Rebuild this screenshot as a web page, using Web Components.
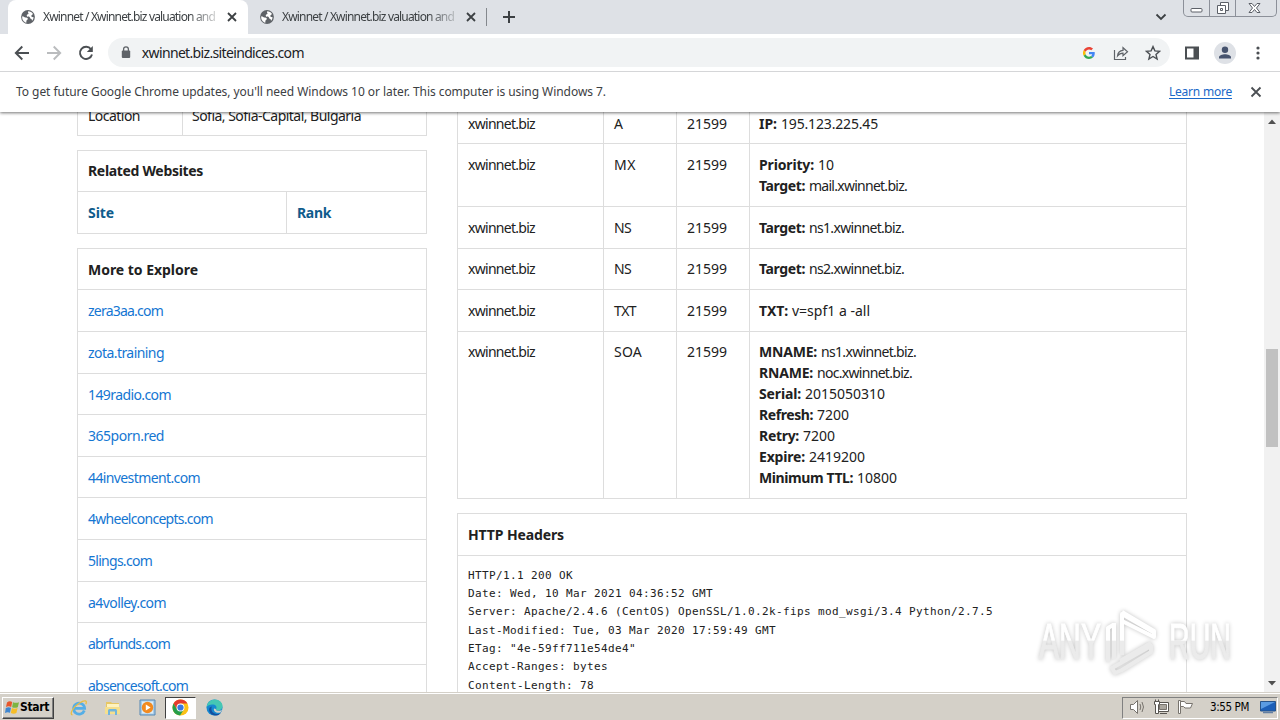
<!DOCTYPE html>
<html lang="en">
<head>
<meta charset="utf-8">
<title>Xwinnet / Xwinnet.biz valuation and</title>
<style>
  html, body { margin: 0; height: 100%; overflow: hidden; }
  body { background: #fff; }
</style>
</head>
<body>
<win-desktop></win-desktop>

<script>
// one line of text, tracked out or in to a given pixel width
class FitText extends HTMLElement {
  connectedCallback() {
    if (this.shadowRoot) return;
    this.attachShadow({ mode: "open" });
    this.shadowRoot.innerHTML = `
      <style>
        :host { display: inline-block; white-space: nowrap; }
        span { display: inline-block; }
      </style>
      <span><slot></slot></span>
    `;
    const span = this.shadowRoot.querySelector("span");
    const want = parseFloat(this.getAttribute("w"));
    const count = this.textContent.length;
    if (!want || !count) return;
    const have = span.getBoundingClientRect().width;
    span.style.letterSpacing = (want - have) / count + "px";
  }
}

const icons = {
  globe: `<svg width="16" height="16" viewBox="0 0 16 16"><circle cx="8" cy="8" r="6.9" fill="#5f6368"/><path d="M2.3 7.2c1.7.2 2.2 1.3 3.8 1.3 1.3 0 2 .8 1.6 1.8-.3.8-1.2.8-1.3 1.8l-.1 1.6C3.6 13 1.7 10.2 2.3 7.2zM8.2 2.2c2 0 3.8 1 4.8 2.7l-1.4 1.3c-.6.5-.2 1.5.5 1.7l1.5.4c-.1 1.4-.7 2.6-1.5 3.5-.3-.9-.2-1.9-1.3-2.1-1-.2-.6-1.5-1.5-2-.9-.5-2.5 0-2.6-1.2-.1-1 1.1-1 1.7-1.5.7-.6-1-1.5-.2-2.8z" fill="#fff"/></svg>`,
  close: `<svg width="16" height="16" viewBox="0 0 16 16"><path d="M4 4l8 8M12 4l-8 8" stroke="#3c4043" stroke-width="1.8"/></svg>`,
  closeBig: `<svg width="16" height="16" viewBox="0 0 16 16"><path d="M3.5 3.5l9 9M12.5 3.5l-9 9" stroke="#4b4f53" stroke-width="1.8"/></svg>`,
  plus: `<svg width="14" height="14" viewBox="0 0 14 14"><path d="M7 1v12M1 7h12" stroke="#3c4043" stroke-width="2"/></svg>`,
  chevron: `<svg width="12" height="8" viewBox="0 0 12 8"><path d="M1.5 1.5L6 6l4.5-4.5" fill="none" stroke="#3c4043" stroke-width="1.8"/></svg>`,
  back: `<svg width="16" height="16" viewBox="0 0 16 16"><path d="M15 8H2M8.3 1.5L1.8 8l6.5 6.5" fill="none" stroke="#4b4f53" stroke-width="1.9"/></svg>`,
  forward: `<svg width="16" height="16" viewBox="0 0 16 16"><path d="M1 8h13M7.7 1.5L14.2 8l-6.5 6.5" fill="none" stroke="#babcbe" stroke-width="1.9"/></svg>`,
  reload: `<svg width="16" height="16" viewBox="0 0 16 16"><path d="M13 4.2A6.1 6.1 0 1 0 14 9.5" fill="none" stroke="#4b4f53" stroke-width="1.9"/><path d="M14.800 1v6H8.800z" fill="#4b4f53"/></svg>`,
  lock: `<svg width="10" height="13" viewBox="0 0 10 13"><rect x=".8" y="4.5" width="8.4" height="7.5" rx="1" fill="#5f6368"/><path d="M2.6 5V3.3a2.4 2.4 0 0 1 4.8 0V5" fill="none" stroke="#5f6368" stroke-width="1.3"/></svg>`,
  google: `<svg width="12" height="12" viewBox="0 0 48 48"><path fill="#EA4335" d="M24 9.5c3.5 0 6.7 1.2 9.2 3.6l6.9-6.9C35.9 2.4 30.5 0 24 0 14.6 0 6.5 5.4 2.6 13.2l8 6.2C12.4 13.7 17.7 9.5 24 9.5z"/><path fill="#4285F4" d="M47 24.6c0-1.6-.2-3.1-.4-4.6H24v9h12.9c-.6 3-2.2 5.5-4.7 7.2l7.7 6C44.4 38 47 31.8 47 24.6z"/><path fill="#FBBC05" d="M10.5 28.6a14.5 14.5 0 0 1 0-9.2l-8-6.2a24 24 0 0 0 0 21.6z"/><path fill="#34A853" d="M24 48c6.5 0 11.9-2.1 15.9-5.8l-7.7-6c-2.2 1.4-4.9 2.3-8.2 2.3-6.3 0-11.6-4.2-13.5-9.9l-8 6.2C6.5 42.6 14.6 48 24 48z"/></svg>`,
  share: `<svg width="16" height="16" viewBox="0 0 16 16"><path d="M1.500 5v9.500h11V12M4.500 11c.4-3.600 2.400-5.400 5.500-5.600V2.700l4.500 4-4.500 4V8.200C7.700 8.200 6 9 4.500 11z" fill="none" stroke="#5f6368" stroke-width="1.200"/></svg>`,
  star: `<svg width="16" height="16" viewBox="0 0 16 16"><path d="M8 1.600l1.900 4.300 4.700.4-3.600 3.100 1.100 4.600L8 11.500 3.900 14 5 9.400 1.400 6.300l4.700-.4z" fill="none" stroke="#4b4f53" stroke-width="1.400"/></svg>`,
  panel: `<svg width="16" height="16" viewBox="0 0 16 16"><path d="M1 1.500h14v13H1zM3 3.500v9h6.500v-9z" fill="#4b4f53" fill-rule="evenodd"/></svg>`,
  avatar: `<svg width="22" height="22" viewBox="0 0 22 22"><circle cx="11" cy="11" r="11" fill="#dee1e6"/><circle cx="11" cy="7.800" r="3.200" fill="#46536e"/><path d="M5 16.500v-1.300c0-2.100 3.500-3 6-3s6 .9 6 3v1.300z" fill="#46536e"/></svg>`,
  dots: `<svg width="4" height="14" viewBox="0 0 4 14"><circle cx="2" cy="2" r="1.600" fill="#4b4f53"/><circle cx="2" cy="7" r="1.600" fill="#4b4f53"/><circle cx="2" cy="12" r="1.600" fill="#4b4f53"/></svg>`,
  flagOrb: `<svg width="15" height="15" viewBox="0 0 15 15"><path d="M2 2.500Q4.500.5 7.200 2L6.200 7Q3.500 5.500 1 7z" fill="#e8562a"/><path d="M8 2.200q2.800 1.300 6 0l-1.200 5q-3 1.200-5.700 0z" fill="#7db440"/><path d="M.8 8q2.700-1.500 5.200-.2L5 12.700Q2.500 11.500 0 13z" fill="#3f86d0"/><path d="M6.900 8.100q2.700 1.200 5.700 0l-1.200 5q-2.800 1.200-5.600-.1z" fill="#f6bd27"/></svg>`,
  ie: `<svg width="18" height="18" viewBox="0 0 18 18"><path d="M14.300 11.500A5.500 5.500 0 1 1 14.600 9.300H5" fill="none" stroke="#55aee6" stroke-width="2.800"/><path d="M2.500 15.800C-1 15.500 3 8 9.500 4c5.500-3.500 8-2.500 6.300 1.200" fill="none" stroke="#e9bd42" stroke-width="1.300"/></svg>`,
  folder: `<svg width="18" height="18" viewBox="0 0 18 18"><path d="M2 3h5l1 1h7v11H2z" fill="#e7c765"/><path d="M3 5h12v4H3z" fill="#fff3bf"/><path d="M1 8h15v7H1z" fill="#f5df8d"/><path d="M4 16v-4.500q0-1.500 1.500-1.500h6q1.500 0 1.500 1.500V16h-2v-3.500H6V16z" fill="#72b5dc"/></svg>`,
  media: `<svg width="17" height="17" viewBox="0 0 17 17"><path d="M1 1h15v15H1z" fill="#a8cce8" stroke="#5689b5"/><path d="M3 2.500h11v12H3z" fill="#dcecf6"/><circle cx="8.500" cy="8.500" r="5.700" fill="#f18a20"/><path d="M6.800 5.500v6l4.800-3z" fill="#fff"/></svg>`,
  chrome: `<svg width="17" height="17" viewBox="0 0 18 18"><circle cx="9" cy="9" r="8.500" fill="#fbc116"/><path d="M1.600 4.800A8.500 8.500 0 0 1 16.400 4.800H9L5.400 11z" fill="#e33b2e"/><path d="M1.600 4.800A8.500 8.500 0 0 0 8.500 17.500L12.600 11 5.400 11z" fill="#269e4b"/><circle cx="9" cy="9" r="4.200" fill="#fff"/><circle cx="9" cy="9" r="3.300" fill="#3878e0"/></svg>`,
  edge: `<svg width="17" height="17" viewBox="0 0 18 18"><circle cx="9" cy="9" r="8.500" fill="#1688d0"/><path d="M.6 8.500C1.200 3.500 5 .5 9.300.5c4.800 0 8.200 3.300 8.200 7 0 3-2.200 4.700-4.700 4.700-1.500 0-2.600-.6-2.200-1.300 1-1.500.8-4.300-2.800-5-3-.5-6 .8-7.200 2.600z" fill="#45c7b4"/><path d="M6.300 8C4.600 11 6.500 15.500 11 15.800c2 .1 3.500-.4 4.800-1.300-2.200 3.300-6.500 3.700-9.600 2C2.500 14.300 2 8.500 6.300 8z" fill="#154f9e"/><path d="M10.500 10.500c-.5 1 .6 2 3 2 1.500 0 3-.8 3.500-1.500-.3 1.600-1.500 3-2.500 3.500-4 .7-7-2-6-4.500z" fill="#d4d0c8"/></svg>`,
  speaker: `<svg width="17" height="16" viewBox="0 0 17 16"><path d="M1.500 5.500h3l4-4v13l-4-4h-3z" fill="#fff" stroke="#77736d"/><path d="M11 5q1.500 3 0 6M13 3q3 5 0 10" fill="none" stroke="#77736d"/></svg>`,
  network: `<svg width="17" height="16" viewBox="0 0 17 16"><path d="M4.500 3.500h11v9h-11z" fill="#fff" stroke="#57544f"/><path d="M6.500 5.500h7v5h-7z" fill="#aaa69e" stroke="#77736d"/><path d="M7 14.500h7" stroke="#57544f"/><path d="M2.500.5v2M5.500.5v2M1.500 2.500h5v3h-1v9h-3v-9h-1z" fill="#fff" stroke="#57544f"/></svg>`,
  flag: `<svg width="17" height="16" viewBox="0 0 17 16"><path d="M1.500 1.500h2v13h-2z" fill="#fff" stroke="#77736d"/><path d="M3.500 2.500h4l1.500 2h6.500l-2 4.500H8L6.500 7.500h-3z" fill="#fff" stroke="#77736d"/></svg>`,
  monitor: `<svg width="16" height="14" viewBox="0 0 16 14"><path d="M.5 1.500h15v9.500H.5z" fill="#1c5fb8" stroke="#27548b"/><path d="M1 2h14L1 9z" fill="#5a9be2"/><path d="M3 12.500h10" stroke="#637fa3" stroke-width="1.500"/></svg>`
};

class BrowserTab extends HTMLElement {
  connectedCallback() {
    if (this.shadowRoot) return;
    this.attachShadow({ mode: "open" });
    this.shadowRoot.innerHTML = `
      <style>
        :host {
          display: flex;
          align-items: center;
          box-sizing: border-box;
          width: 239px;
          height: 34px;
          padding: 0 7px 0 12px;
          font: 12px "Noto Sans", sans-serif;
          color: #3c4043;
        }
        :host([active]) {
          width: 240px;
          margin-right: -1px;
          padding-right: 8px;
          background: #fff;
          border-radius: 8px 8px 0 0;
        }
        svg { display: block; flex: none; }
        .title {
          flex: 1;
          margin-left: 7px;
          overflow: hidden;
          line-height: 18px;
          -webkit-mask-image: linear-gradient(90deg, #000 145px, rgba(0,0,0,.25) 172px);
        }
      </style>
      ${icons.globe}
      <div class="title"><fit-text w="172">${this.getAttribute("label")}</fit-text></div>
      ${icons.close}
    `;
  }
}

class CaptionButtons extends HTMLElement {
  connectedCallback() {
    this.attachShadow({ mode: "open" });
    this.shadowRoot.innerHTML = `
      <style>
        :host {
          display: flex;
          box-sizing: border-box;
          width: 94px;
          height: 17px;
          border: 1px solid #8c9099;
          border-top: 0;
          border-radius: 0 0 5px 5px;
          overflow: hidden;
        }
        div { display: flex; justify-content: center; align-items: center; width: 25px; border-right: 1px solid #8c9099; }
        div:last-child { flex: 1; border: 0; }
        svg { display: block; }
      </style>
      <div><svg width="13" height="16"><rect x="1" y="8.5" width="11" height="3.5" rx="1" fill="#fff" stroke="#5c6068"/></svg></div>
      <div><svg width="14" height="16"><path d="M4.5 2.5h8v8h-8z" fill="#fff" stroke="#5c6068"/><path d="M1.5 5.5h8v8h-8z" fill="#fff" stroke="#5c6068"/><path d="M4.5 8.5h2v2h-2z" fill="none" stroke="#5c6068"/></svg></div>
      <div><svg width="13" height="16" style="margin-right: 4px"><path d="M1 3.500h3l2.500 3 2.500-3h3L8.500 8l3.500 4.500H9l-2.500-3-2.500 3H1L4.500 8z" fill="#fff" stroke="#5c6068"/></svg></div>
    `;
  }
}

class BrowserChrome extends HTMLElement {
  connectedCallback() {
    this.attachShadow({ mode: "open" });
    this.shadowRoot.innerHTML = `
      <style>
        :host {
          display: block;
          height: 112px;
          position: relative;
          z-index: 1;
          background: #fff;
          box-shadow: 0 1px 3px rgba(0,0,0,.55);
          font-family: "Noto Sans", sans-serif;
          color: #202124;
        }
        svg { display: block; flex: none; }
        .strip { display: flex; height: 34px; background: #dee1e6; padding-left: 8px; }
        .divider { width: 1px; height: 18px; margin: 8px 0 0; background: #84888d; }
        .new { margin: 10px 0 0 15px; }
        .more { margin: 13px 16px 0 auto; }
        caption-buttons { margin-right: 3px; }
        .toolbar {
          display: flex;
          align-items: center;
          box-sizing: border-box;
          height: 38px;
          padding: 0 20px 0 14px;
          border-bottom: 1px solid #d5d6d8;
        }
        .nav { display: flex; gap: 16px; width: 94px; }
        .address {
          display: flex;
          align-items: center;
          box-sizing: border-box;
          width: 1064px;
          height: 29px;
          padding: 0 9px 0 13px;
          border-radius: 15px;
          background: #f1f3f4;
          font-size: 14px;
          line-height: 20px;
        }
        .address fit-text { margin-left: 11px; }
        .actions { display: flex; gap: 16px; margin-left: auto; align-items: center; }
        .actions svg:first-child { margin-right: 2px; }
        .right { display: flex; align-items: center; margin-left: 14px; }
        .right svg + svg { margin-left: 14px; }
        .right svg:last-child { margin-left: 20px; }
        .info {
          display: flex;
          align-items: center;
          box-sizing: border-box;
          height: 40px;
          padding: 0 16px 1px;
          font-size: 12px;
          color: #3c4043;
        }
        a { margin-left: auto; color: #1a68c8; }
        a fit-text { border-bottom: 1px solid; line-height: 13px; margin-top: 1px; }
        .info svg { margin-left: 16px; }
      </style>
      <div class="strip">
        <browser-tab active label="Xwinnet / Xwinnet.biz valuation and"></browser-tab>
        <browser-tab label="Xwinnet / Xwinnet.biz valuation and"></browser-tab>
        <div class="divider"></div>
        <div class="new">${icons.plus}</div>
        <div class="more">${icons.chevron}</div>
        <caption-buttons></caption-buttons>
      </div>
      <div class="toolbar">
        <div class="nav">${icons.back}${icons.forward}${icons.reload}</div>
        <div class="address">
          ${icons.lock}
          <fit-text w="162">xwinnet.biz.siteindices.com</fit-text>
          <div class="actions">${icons.google}${icons.share}${icons.star}</div>
        </div>
        <div class="right">${icons.panel}${icons.avatar}${icons.dots}</div>
      </div>
      <div class="info">
        <fit-text w="590">To get future Google Chrome updates, you'll need Windows 10 or later. This computer is using Windows 7.</fit-text>
        <a><fit-text w="63">Learn more</fit-text></a>
        ${icons.closeBig}
      </div>
    `;
  }
}

// bordered box with an optional bold heading row
class InfoCard extends HTMLElement {
  connectedCallback() {
    this.attachShadow({ mode: "open" });
    const heading = this.getAttribute("heading");
    this.shadowRoot.innerHTML = `
      <style>
        :host { display: block; box-sizing: border-box; border: 1px solid #ddd; margin-bottom: 14px; }
        .heading {
          box-sizing: border-box;
          height: var(--heading-height, 41.4px);
          padding: var(--heading-top, 10px) 10px 0;
          line-height: 21px;
          font-weight: 700;
          border-bottom: 1px solid #ddd;
        }
      </style>
      ${heading ? `<div class="heading"><fit-text w="${this.getAttribute("w")}">${heading}</fit-text></div>` : ""}
      <slot></slot>
    `;
  }
}

class SiteSidebar extends HTMLElement {
  connectedCallback() {
    this.attachShadow({ mode: "open" });
    const sites = [
      ["zera3aa.com", 75], ["zota.training", 76], ["149radio.com", 83], ["365porn.red", 76],
      ["44investment.com", 112], ["4wheelconcepts.com", 125], ["5lings.com", 64],
      ["a4volley.com", 78], ["abrfunds.com", 82], ["absencesoft.com", 100]
    ];
    this.shadowRoot.innerHTML = `
      <style>
        :host { display: block; width: 350px; }
        .related { --heading-top: 9px; }
        .row { display: flex; line-height: 21px; }
        .row > div { box-sizing: border-box; padding: 10px 9px; }
        .row > div + div { border-left: 1px solid #ddd; }
        .row > div:first-child { padding-left: 10px; }
        .location > div { padding-top: 0; height: 30px; }
        .location > div:first-child { width: 104px; }
        .ranks { height: 40.6px; color: #0f5c8c; font-weight: 700; }
        .ranks > div:first-child { width: 208px; }
        .ranks > div + div { padding-left: 10px; }
        .site { box-sizing: border-box; height: 41.6px; padding: 10px; line-height: 21px; border-bottom: 1px solid #ddd; color: #1476d2; }
      </style>
      <info-card>
        <div class="row location">
          <div><fit-text w="52">Location</fit-text></div>
          <div><fit-text w="169">Sofia, Sofia-Capital, Bulgaria</fit-text></div>
        </div>
      </info-card>
      <info-card class="related" heading="Related Websites" w="115">
        <div class="row ranks">
          <div><fit-text w="26">Site</fit-text></div>
          <div><fit-text w="34">Rank</fit-text></div>
        </div>
      </info-card>
      <info-card heading="More to Explore" w="110">
        ${sites.map(([name, w]) => `<div class="site"><fit-text w="${w}">${name}</fit-text></div>`).join("")}
      </info-card>
    `;
  }
}

class DnsRecords extends HTMLElement {
  connectedCallback() {
    this.attachShadow({ mode: "open" });
    // type, type width, row height, top padding, list of [label, label width, value, value width]
    const records = [
      ["A", 10, 42, 11, [["IP:", 18, "195.123.225.45", 97]]],
      ["MX", 22, 63, 10, [["Priority:", 55, "10", 16], ["Target:", 46, "mail.xwinnet.biz.", 98]]],
      ["NS", 17, 42, 10, [["Target:", 46, "ns1.xwinnet.biz.", 95]]],
      ["NS", 17, 41, 9, [["Target:", 46, "ns2.xwinnet.biz.", 95]]],
      ["TXT", 22, 42, 10, [["TXT:", 29, "v=spf1 a -all", 78]]],
      ["SOA", 28, 166, 9, [
        ["MNAME:", 58, "ns1.xwinnet.biz.", 95], ["RNAME:", 54, "noc.xwinnet.biz.", 95],
        ["Serial:", 42, "2015050310", 80], ["Refresh:", 54, "7200", 32],
        ["Retry:", 40, "7200", 32], ["Expire:", 46, "2419200", 56],
        ["Minimum TTL:", 94, "10800", 40]
      ]]
    ];
    this.shadowRoot.innerHTML = `
      <style>
        .record {
          display: grid;
          grid-template-columns: 145px 73px 73px 1fr;
          box-sizing: border-box;
          border-bottom: 1px solid #ddd;
          line-height: 21px;
        }
        .record:last-child { border-bottom: 0; }
        .record > div { padding: var(--top) 0 0 10px; border-left: 1px solid #ddd; }
        .record > div:first-child { border: 0; }
        .record > div:last-child { padding-left: 9px; }
        .field { display: flex; gap: 4px; height: 21px; }
        b { font-weight: 700; }
      </style>
      ${records.map(([type, tw, height, top, fields]) => `
        <div class="record" style="height: ${height}px; --top: ${top}px">
          <div><fit-text w="67">xwinnet.biz</fit-text></div>
          <div><fit-text w="${tw}">${type}</fit-text></div>
          <div><fit-text w="40">21599</fit-text></div>
          <div>
            ${fields.map(([label, lw, value, vw]) => `
              <div class="field"><b><fit-text w="${lw}">${label}</fit-text></b><fit-text w="${vw}">${value}</fit-text></div>
            `).join("")}
          </div>
        </div>
      `).join("")}
    `;
  }
}

class HttpHeaders extends HTMLElement {
  connectedCallback() {
    this.attachShadow({ mode: "open" });
    this.shadowRoot.innerHTML = `
      <style>
        pre {
          margin: 0;
          padding: 10.6px 10px;
          font: 11px/18.35px "DejaVu Sans Mono", monospace;
          letter-spacing: .378px;
        }
      </style>
      <pre>HTTP/1.1 200 OK
Date: Wed, 10 Mar 2021 04:36:52 GMT
Server: Apache/2.4.6 (CentOS) OpenSSL/1.0.2k-fips mod_wsgi/3.4 Python/2.7.5
Last-Modified: Tue, 03 Mar 2020 17:59:49 GMT
ETag: "4e-59ff711e54de4"
Accept-Ranges: bytes
Content-Length: 78</pre>
    `;
  }
}

class PageScrollbar extends HTMLElement {
  connectedCallback() {
    this.attachShadow({ mode: "open" });
    this.shadowRoot.innerHTML = `
      <style>
        :host { display: flex; flex-direction: column; align-items: center; width: 16px; background: #f1f1f1; }
        svg { display: block; margin-top: 7px; }
        .thumb { width: 12px; height: 98px; margin-top: 225px; background: #c1c1c1; }
        .down { margin: auto 0 6px; }
      </style>
      <svg width="8" height="5"><path d="M0 5l4-4.5L8 5z" fill="#505050"/></svg>
      <div class="thumb"></div>
      <svg class="down" width="8" height="5"><path d="M0 0l4 4.5L8 0z" fill="#505050"/></svg>
    `;
  }
}

class RunWatermark extends HTMLElement {
  connectedCallback() {
    this.attachShadow({ mode: "open" });
    this.shadowRoot.innerHTML = `
      <style>
        :host { display: block; position: absolute; left: 1030px; top: 604px; }
        svg { display: block; filter: drop-shadow(0 0 2px rgba(0,0,0,.24)); }
        text { font: 50px "Liberation Sans", sans-serif; fill: url(#tone); stroke: url(#tone); }
      </style>
      <svg width="210" height="74" viewBox="0 0 210 74">
        <defs>
          <linearGradient id="tone" gradientUnits="userSpaceOnUse" x1="0" y1="0" x2="0" y2="74">
            <stop offset=".49" stop-color="#fff"/>
            <stop offset=".5" stop-color="#ebebeb"/>
          </linearGradient>
        </defs>
        <text x="9" y="55" textLength="62" lengthAdjust="spacingAndGlyphs">ANY</text>
        <text x="139" y="55" textLength="62" lengthAdjust="spacingAndGlyphs">RUN</text>
        <g fill="none" stroke="url(#tone)" stroke-width="4" stroke-linejoin="round">
          <path d="M84 55V19M92 51V10l31 18M90 57l31-18"/>
          <path d="M92 8l32 19v6L92 17M78 58V24l5-3"/>
          <path d="M82 64l39-22v6L92 66l-7 3z"/>
        </g>
      </svg>
    `;
  }
}

class WinTaskbar extends HTMLElement {
  connectedCallback() {
    this.attachShadow({ mode: "open" });
    this.shadowRoot.innerHTML = `
      <style>
        :host {
          display: flex;
          align-items: center;
          box-sizing: border-box;
          height: 28px;
          padding: 2px 2px 0;
          background: #d4d0c8;
          border-top: 1px solid #d4d0c8;
          box-shadow: inset 0 1px #fff;
          font: 12px/16px "DejaVu Sans Condensed", "DejaVu Sans", sans-serif;
          color: #000;
        }
        svg { display: block; flex: none; }
        .start {
          display: flex;
          align-items: center;
          box-sizing: border-box;
          width: 52px;
          height: 22px;
          padding: 0 0 1px 2px;
          border: 1px solid;
          border-color: #fff #404040 #404040 #fff;
          box-shadow: inset -1px -1px #808080;
          font-weight: bold;
        }
        .apps { display: flex; margin-left: 8px; }
        .apps div {
          display: flex;
          justify-content: center;
          align-items: center;
          box-sizing: border-box;
          width: 34px;
          height: 22px;
        }
        .apps .open {
          width: 31px;
          margin: 0 1px 0 1px;
          background: #fff;
          border: 1px solid;
          border-color: #404040 #fff #fff #404040;
        }
        .tray {
          display: flex;
          align-items: center;
          box-sizing: border-box;
          width: 156px;
          height: 22px;
          margin-left: auto;
          padding: 0 1px 1px 6px;
          border: 1px solid;
          border-color: #808080 #fff #fff #808080;
        }
        .tray svg + svg { margin-left: 7px; }
        .tray fit-text { margin: 0 11px 0 16px; font-size: 11.5px; }
      </style>
      <div class="start">${icons.flagOrb}<fit-text w="29">Start</fit-text></div>
      <div class="apps">
        <div>${icons.ie}</div>
        <div>${icons.folder}</div>
        <div>${icons.media}</div>
        <div class="open">${icons.chrome}</div>
        <div>${icons.edge}</div>
      </div>
      <div class="tray">
        ${icons.speaker}${icons.network}${icons.flag}
        <fit-text w="39">3:55 PM</fit-text>
        ${icons.monitor}
      </div>
    `;
  }
}

class WinDesktop extends HTMLElement {
  connectedCallback() {
    this.attachShadow({ mode: "open" });
    this.shadowRoot.innerHTML = `
      <style>
        :host {
          display: flex;
          flex-direction: column;
          position: relative;
          width: 1280px;
          height: 720px;
          overflow: hidden;
          background: #fff;
        }
        .view { display: flex; height: 580px; overflow: hidden; }
        .page {
          display: flex;
          gap: 30px;
          flex: 1;
          padding-left: 77px;
          overflow: hidden;
          font: 14px "Noto Sans", sans-serif;
          color: #212121;
        }
        site-sidebar { margin-top: -8px; }
        main { width: 730px; margin-top: -11px; }
        .headers { --heading-height: 42px; }
      </style>
      <browser-chrome></browser-chrome>
      <div class="view">
        <div class="page">
          <site-sidebar></site-sidebar>
          <main>
            <info-card><dns-records></dns-records></info-card>
            <info-card class="headers" heading="HTTP Headers" w="96"><http-headers></http-headers></info-card>
          </main>
        </div>
        <page-scrollbar></page-scrollbar>
      </div>
      <win-taskbar></win-taskbar>
      <run-watermark></run-watermark>
    `;
  }
}

customElements.define("fit-text", FitText);
customElements.define("browser-tab", BrowserTab);
customElements.define("caption-buttons", CaptionButtons);
customElements.define("browser-chrome", BrowserChrome);
customElements.define("info-card", InfoCard);
customElements.define("site-sidebar", SiteSidebar);
customElements.define("dns-records", DnsRecords);
customElements.define("http-headers", HttpHeaders);
customElements.define("page-scrollbar", PageScrollbar);
customElements.define("run-watermark", RunWatermark);
customElements.define("win-taskbar", WinTaskbar);
customElements.define("win-desktop", WinDesktop);
</script>
</body>
</html>
